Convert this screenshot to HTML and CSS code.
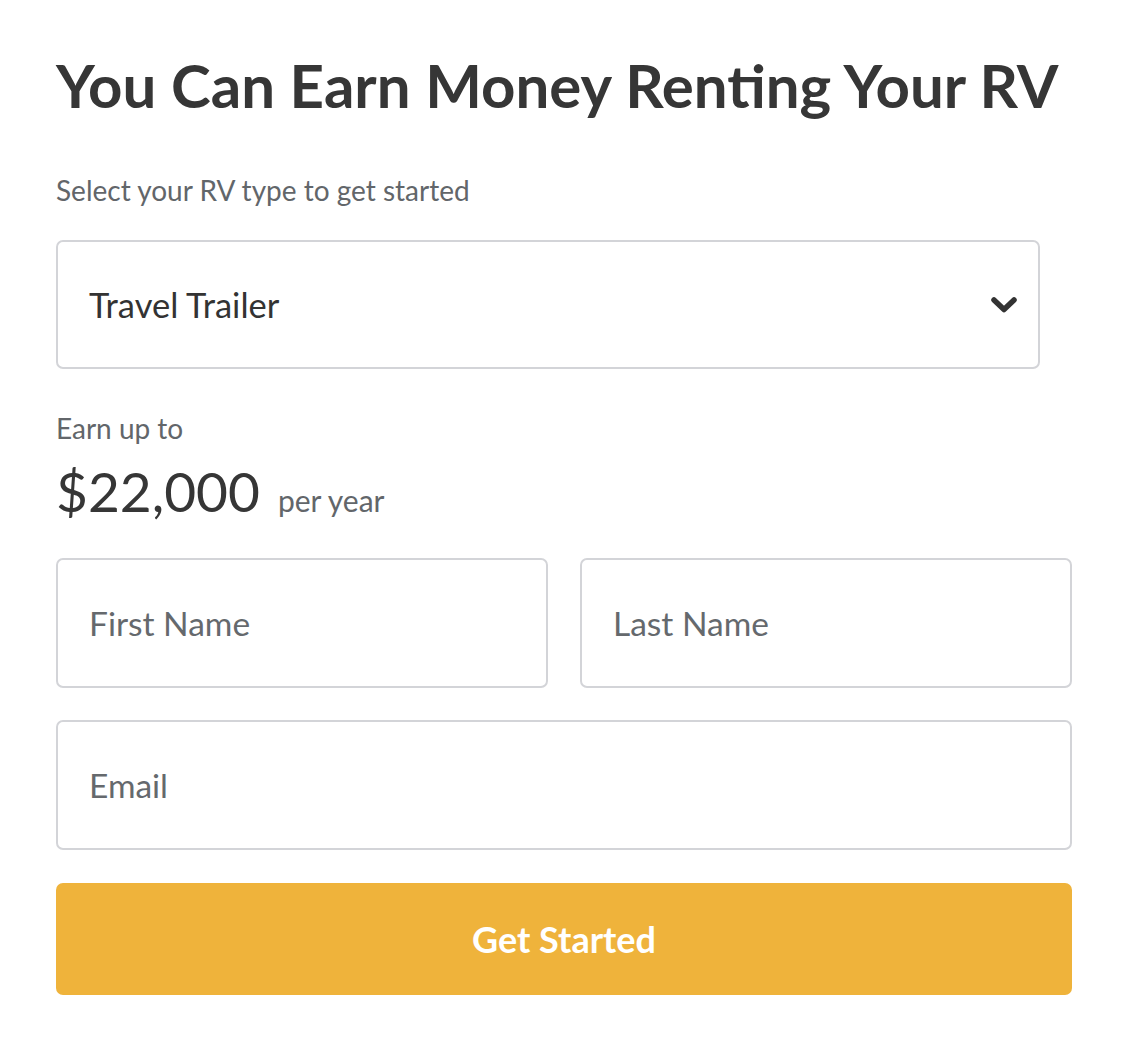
FILE: index.html
```html
<!DOCTYPE html>
<html lang="en">
<head>
<meta charset="utf-8">
<title>Earn Money Renting Your RV</title>
<link rel="stylesheet" href="styles.css">
</head>
<body>
<main class="card">
  <h1 class="title">You Can Earn Money Renting Your RV</h1>
  <p class="label label-select">Select your RV type to get started</p>
  <div class="select">
    <span class="select-value">Travel Trailer</span>
    <svg class="chevron" width="28" height="18" viewBox="0 0 28 18" aria-hidden="true">
      <path d="M4 4 L14 13.5 L24 4" fill="none" stroke="#333" stroke-width="5.5" stroke-linecap="round" stroke-linejoin="round"/>
    </svg>
  </div>
  <p class="label label-earn">Earn up to</p>
  <div class="earn">
    <span class="amount">$22,000</span>
    <span class="period">per year</span>
  </div>
  <div class="row">
    <div class="field"><span class="placeholder">First Name</span></div>
    <div class="field"><span class="placeholder">Last Name</span></div>
  </div>
  <div class="field field-full"><span class="placeholder">Email</span></div>
  <button class="btn" type="button">Get Started</button>
</main>
</body>
</html>
```

FILE: styles.css
```css
* { box-sizing: border-box; }

html, body {
  margin: 0;
  padding: 0;
  background: #ffffff;
}

body {
  font-family: "Lato", "Open Sans", sans-serif;
  color: #363636;
}

.card {
  width: 1122px;
  padding: 0 50px 0 56px;
}

.title {
  margin: 49px 0 0;
  font-size: 60px;
  line-height: 72px;
  font-weight: 700;
  color: #363636;
  white-space: nowrap;
}

.label {
  margin: 0;
  color: #62666a;
  font-size: 28px;
  line-height: 32px;
}

.label-select {
  margin-top: 53px;
}

.select {
  margin-top: 34px;
  width: 984px;
  height: 129px;
  border: 2px solid #d3d4d8;
  border-radius: 7px;
  display: flex;
  align-items: center;
  justify-content: space-between;
  padding: 0 20px 0 31px;
}

.select-value {
  font-size: 34.5px;
  color: #333333;
}

.label-earn {
  margin-top: 43px;
}

.earn {
  display: flex;
  align-items: baseline;
  gap: 18px;
  margin-top: 13px;
}

.amount {
  font-size: 55px;
  line-height: 68px;
  color: #363636;
}

.period {
  font-size: 30px;
  color: #62666a;
}

.row {
  margin-top: 33px;
  display: flex;
  gap: 32px;
}

.field {
  flex: 1;
  height: 130px;
  border: 2px solid #d3d4d8;
  border-radius: 7px;
  display: flex;
  align-items: center;
  padding: 0 31px;
}

.field-full {
  margin-top: 32px;
  width: 1016px;
}

.placeholder {
  font-size: 33.5px;
  color: #65696d;
}

.btn {
  display: flex;
  align-items: center;
  justify-content: center;
  margin-top: 33px;
  width: 1016px;
  height: 112px;
  border: 0;
  border-radius: 7px;
  background: #efb33b;
  color: #ffffff;
  font-family: "Lato", "Open Sans", sans-serif;
  font-size: 36px;
  font-weight: 700;
  padding: 0;
}
```
